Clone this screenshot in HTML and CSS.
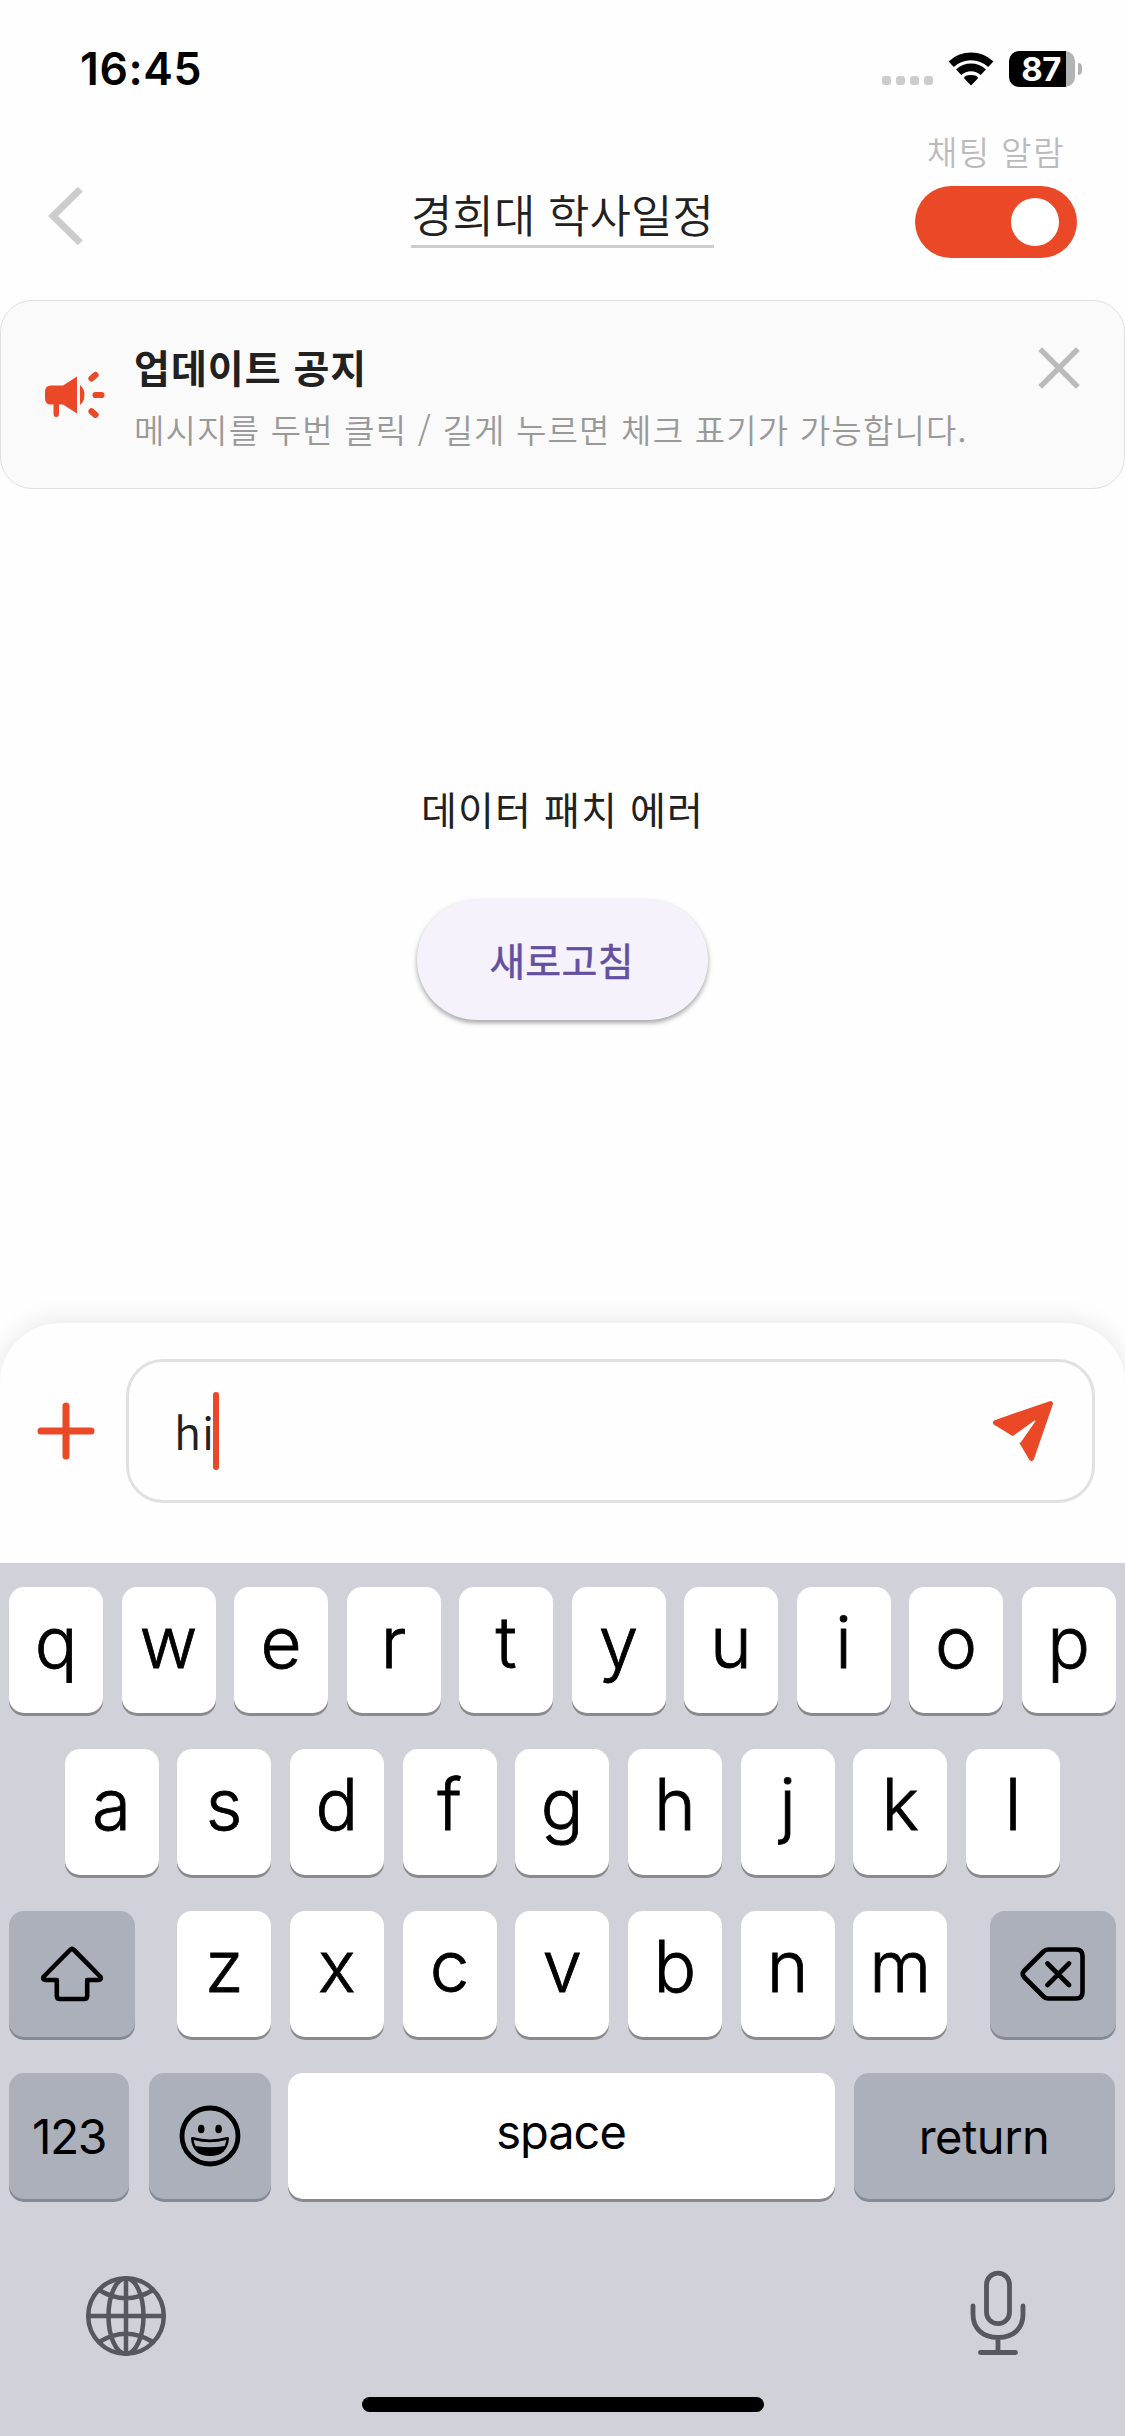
FILE: index.html
```
<!DOCTYPE html>
<html lang="ko">
<head>
<meta charset="utf-8">
<title>경희대 학사일정</title>
<link rel="stylesheet" href="styles.css">
</head>
<body>
<div class="screen">
  <div class="status">
    <span class="time">16:45</span>
    <div class="status-icons">
      <div class="cell"><i></i><i></i><i></i><i></i></div>
      <svg class="wifi" width="46" height="34" viewBox="0 0 46 34">
        <g fill="none" stroke="#000" stroke-width="7.6">
          <path d="M3.2 12.2A29 29 0 0 1 42.8 12.2"/>
          <path d="M10.7 20.2A18.1 18.1 0 0 1 35.3 20.2"/>
        </g>
        <path d="M23 33.5L16 26.2Q16.5 23 23 23T30 26.2Z"/>
      </svg>
      <div class="battery"><span class="level">87</span></div>
      <div class="nub"></div>
    </div>
  </div>

  <header class="header">
    <svg class="back" width="36" height="60" viewBox="0 0 36 60"><path d="M32.3 3.3L5 30L32.3 56.7" fill="none" stroke="#ccc" stroke-width="7"/></svg>
    <h1 class="title">경희대 학사일정</h1>
    <div class="alarm">
      <span class="alarm-label">채팅 알람</span>
      <div class="switch"><div class="knob"></div></div>
    </div>
  </header>

  <section class="notice">
    <svg class="horn" width="62" height="50" viewBox="0 0 62 50">
      <g fill="#ea4826">
        <path d="M7 15.500H19L33 6.500V43.500L19 34.500H15V44Q15 47 12.300 47T9.500 44V34.500H7Q1 34.500 1 28.500V21.500Q1 15.500 7 15.500Z"/>
        <path d="M36 15Q40.500 19 40.500 25T36 35Z"/>
      </g>
      <path d="M47.500 8.500L51.500 5M51.500 25H57.500M47.500 41.300L51.500 44.800" fill="none" stroke="#ea4826" stroke-width="6.200" stroke-linecap="round"/>
    </svg>
    <div class="notice-text">
      <h2 class="notice-title">업데이트 공지</h2>
      <p class="notice-desc">메시지를 두번 클릭 / 길게 누르면 체크 표기가 가능합니다.</p>
    </div>
    <svg class="close" width="42" height="42" viewBox="0 0 42 42"><path d="M2.200 2.200L39.800 39.800M39.800 2.200L2.200 39.800" stroke="#bbb" stroke-width="5.400" fill="none"/></svg>
  </section>

  <main class="content">
    <p class="error">데이터 패치 에러</p>
    <button class="retry">새로고침</button>
  </main>

  <section class="composer">
    <svg class="plus" width="58" height="58" viewBox="0 0 58 58"><path d="M4 29H54M29 4V54" stroke="#ea4826" stroke-width="7" stroke-linecap="round"/></svg>
    <div class="field">
      <span class="typed">hi</span><span class="caret"></span>
      <svg class="send" width="62" height="62" viewBox="0 0 62 62"><path d="M58.500 3.500L39.500 58.500L30 42.500L45 17.500L21.500 33.500L3.500 22.500Z" fill="#ea4826" stroke="#ea4826" stroke-width="5" stroke-linejoin="round"/><path d="M20.500 36.300L42.500 20.500Q43.800 20 43.300 21.500L28.300 43" fill="#fefefe"/></svg>
    </div>
  </section>

  <section class="keyboard">
    <div class="row">
      <div class="key">q</div><div class="key">w</div><div class="key">e</div><div class="key">r</div><div class="key">t</div><div class="key">y</div><div class="key">u</div><div class="key">i</div><div class="key">o</div><div class="key">p</div>
    </div>
    <div class="row middle">
      <div class="key">a</div><div class="key">s</div><div class="key">d</div><div class="key">f</div><div class="key">g</div><div class="key">h</div><div class="key">j</div><div class="key">k</div><div class="key">l</div>
    </div>
    <div class="row spread">
      <div class="key fn shift"><svg width="64" height="56" viewBox="0 0 64 56"><path d="M30 4Q32 2 34 4L60.200 30.500Q62 33.500 58.500 34H47.200V50Q47.200 53 44.200 53H19.800Q16.800 53 16.800 50V34H5.500Q2 33.500 3.800 30.500Z" fill="none" stroke="#000" stroke-width="4.600" stroke-linejoin="round"/></svg></div>
      <div class="letters">
        <div class="key">z</div><div class="key">x</div><div class="key">c</div><div class="key">v</div><div class="key">b</div><div class="key">n</div><div class="key">m</div>
      </div>
      <div class="key fn shift"><svg class="del" width="66" height="56" viewBox="0 0 66 56"><path d="M28 3.500H56Q62.500 3.500 62.500 10V46Q62.500 52.500 56 52.500H28Q25.500 52.500 23.500 50.500L4 31Q1.500 28 4 25L23.500 5.500Q25.500 3.500 28 3.500ZM27.500 17.500L49 39M49 17.500L27.500 39" fill="none" stroke="#000" stroke-width="4.600" stroke-linecap="round" stroke-linejoin="round"/></svg></div>
    </div>
    <div class="row bottom">
      <div class="key fn num">123</div>
      <div class="key fn emoji"><svg width="62" height="62" viewBox="0 0 62 62"><circle cx="31" cy="31" r="28" fill="none" stroke="#000" stroke-width="4.800"/><ellipse cx="22.200" cy="24" rx="3.300" ry="4.300"/><ellipse cx="39.600" cy="24" rx="3.300" ry="4.300"/><path d="M13.500 33.500Q31 38.500 48.500 33.500Q47 49.500 31 49.500T13.500 33.500Z" stroke="#000" stroke-width="3" stroke-linejoin="round"/><path d="M14.800 35Q31 39.500 47.200 35Q47 38 45.500 41Q31 43.500 16.500 41Q15 38 14.800 35Z" fill="#abb0ba"/></svg></div>
      <div class="key space">space</div>
      <div class="key fn return">return</div>
    </div>
    <div class="dock">
      <svg width="82" height="82" viewBox="0 0 82 82"><g fill="none" stroke="#55585d" stroke-width="4.500"><circle cx="41" cy="41" r="37.800"/><ellipse cx="41" cy="41" rx="17.500" ry="37.800"/><path d="M41 3V79M3 41H79M14 15Q41 31.500 68 15M14 67Q41 50.500 68 67"/></g></svg>
      <svg width="56" height="86" viewBox="0 0 56 86"><g fill="none" stroke="#55585d" stroke-width="4.800" stroke-linecap="round"><rect x="16.500" y="3.200" width="23" height="50.500" rx="11.500"/><path d="M3 36V44C3 58 12 67.500 28 67.500S53 58 53 44V36M28 67.500V82M10.500 82.500H45.500"/></g></svg>
    </div>
    <div class="home"></div>
  </section>
</div>
</body>
</html>
```
FILE: styles.css
```
* { box-sizing: border-box; }
body { margin: 0; background: #fefefe; }
h1, h2, p { margin: 0; }

.screen {
  width: 1125px;
  height: 2436px;
  display: flex;
  flex-direction: column;
  overflow: hidden;
  background: #fefefe;
  font-family: "Noto Sans CJK KR", sans-serif;
  color: #212121;
}

/* status bar */
.status {
  height: 120px;
  display: flex;
  justify-content: space-between;
  align-items: flex-start;
  padding: 43px 43px 0 80px;
  font-family: Inter, sans-serif;
  color: #000;
}
.time { font-size: 44.500px; font-weight: 600; line-height: 52px; letter-spacing: 0.600px; }
.status-icons { display: flex; align-items: center; padding-top: 8px; height: 44px; }
.cell { display: flex; gap: 5px; margin: 23px 15px 0 0; }
.cell i { width: 9px; height: 9px; border-radius: 3px; background: #ccc; }
.wifi { margin-right: 15px; }
.battery {
  width: 66px;
  height: 36px;
  border-radius: 10px;
  background: linear-gradient(to right, #000 57px, #b3b3b3 57px);
}
.level {
  display: block;
  width: 64px;
  text-align: center;
  font-size: 33px;
  font-weight: 700;
  line-height: 36px;
  letter-spacing: -0.5px;
  color: #fff;
}
.nub { width: 4px; height: 12px; margin-left: 3px; border-radius: 0 4px 4px 0; background: #b3b3b3; }

/* header */
.header {
  height: 180px;
  display: grid;
  grid-template-columns: 1fr auto 1fr;
  align-items: start;
  padding: 0 48px;
}
.back { margin-top: 66px; }
.title {
  margin-top: 66px;
  padding: 0;
  height: 62px;
  border-bottom: 3px solid #ccc;
  font-size: 45px;
  font-weight: 350;
  line-height: 56px;
  letter-spacing: 0.1px;
}
.alarm { display: flex; flex-direction: column; align-items: center; justify-self: end; width: 162px; }
.alarm-label {
  margin-top: 7px;
  font-size: 33px;
  font-weight: 350;
  line-height: 48px;
  letter-spacing: 1.5px;
  color: #bbb;
  white-space: nowrap;
}
.switch {
  width: 162px;
  height: 72px;
  margin-top: 11px;
  padding: 0 18px;
  display: flex;
  align-items: center;
  justify-content: flex-end;
  border-radius: 36px;
  background: #ea4826;
}
.knob { width: 48px; height: 48px; border-radius: 50%; background: #fff; }

/* notice */
.notice {
  height: 189px;
  display: flex;
  align-items: flex-start;
  padding: 0 44px 0 43px;
  border: 1.500px solid #e0e0e0;
  border-radius: 32px;
  background: #fafafa;
}
.horn { margin-top: 69px; }
.notice-text { flex: 1; margin: 37px 0 0 28px; }
.notice-title { font-size: 39px; font-weight: 700; line-height: 56px; letter-spacing: 1px; }
.notice-desc {
  margin-top: 11px;
  font-size: 33px;
  font-weight: 350;
  line-height: 48px;
  letter-spacing: 1.200px;
  color: #999;
  white-space: nowrap;
}
.close { margin-top: 46px; }

/* message area */
.content { height: 834px; display: flex; flex-direction: column; align-items: center; }
.error { margin-top: 291px; font-size: 39px; font-weight: 400; line-height: 56px; letter-spacing: 1.100px; }
.retry {
  width: 291px;
  height: 120px;
  margin-top: 64px;
  padding: 0 2px 3px 0;
  border: 0;
  border-radius: 60px;
  background: #f5f2fb;
  box-shadow: 0 3px 4px rgba(0, 0, 0, 0.26), 0 2px 7px rgba(0, 0, 0, 0.12);
  font: 400 39px/56px "Noto Sans CJK KR", sans-serif;
  -webkit-text-stroke: 0.500px #6350a0;
  letter-spacing: 0.300px;
  color: #6350a0;
}

/* composer */
.composer {
  height: 240px;
  display: flex;
  align-items: flex-start;
  padding: 36px 30px 0 37px;
  border-radius: 60px 60px 0 0;
  background: #fefefe;
  box-shadow: 0 -3px 24px rgba(0, 0, 0, 0.09);
}
.plus { margin: 43px 31px 0 0; }
.field {
  flex: 1;
  height: 144px;
  display: flex;
  align-items: center;
  padding: 0 38px 0 45px;
  border: 3px solid #e1e1e1;
  border-radius: 37px;
}
.typed { font-size: 45px; font-weight: 350; line-height: 66px; letter-spacing: 0.800px; }
.caret { width: 6px; height: 78px; margin-left: -1.500px; border-radius: 3px; background: #ea4826; }
.send { margin-left: auto; }

/* keyboard */
.keyboard {
  flex: 1;
  display: flex;
  flex-direction: column;
  padding: 24px 9.500px 0 9px;
  background: #d1d1d9;
  font-family: Inter, sans-serif;
  color: #000;
}
.row { display: flex; justify-content: space-between; height: 126px; margin-bottom: 36px; }
.row.middle { padding: 0 55.500px; }
.letters { display: flex; justify-content: space-between; width: 770px; }
.key {
  width: 94px;
  height: 126px;
  display: flex;
  align-items: center;
  justify-content: center;
  padding: 0 0 16px 0;
  border-radius: 15px;
  background: #fff;
  box-shadow: 0 3px 0 #8a8a8e;
  font-size: 71px;
  font-weight: 300;
  -webkit-text-stroke: 0.800px #000;
}
.key.fn { background: #abb0ba; box-shadow: 0 3px 0 #868a93; padding-bottom: 0; }
.key.shift { width: 126px; }
.key.num, .key.space, .key.return { -webkit-text-stroke: 0; font-weight: 400; }
.key.num { width: 120px; font-size: 48px; letter-spacing: -1.500px; }
.key.emoji { width: 122.500px; margin-left: 19.500px; }
.key.space { width: 547px; margin-left: 16.500px; padding-bottom: 9px; font-size: 47px; letter-spacing: -1px; }
.key.return { width: 261px; margin-left: 19px; font-size: 47px; letter-spacing: -0.500px; }
.row.bottom { justify-content: flex-start; margin-bottom: 0; }
.dock { display: flex; justify-content: space-between; align-items: flex-start; height: 127px; margin-top: 71px; padding: 0 90px 0 76px; }
.dock svg:first-child { margin-top: 5px; }
.home { width: 402px; height: 15px; margin-left: 353px; border-radius: 8px; background: #000; }
```
